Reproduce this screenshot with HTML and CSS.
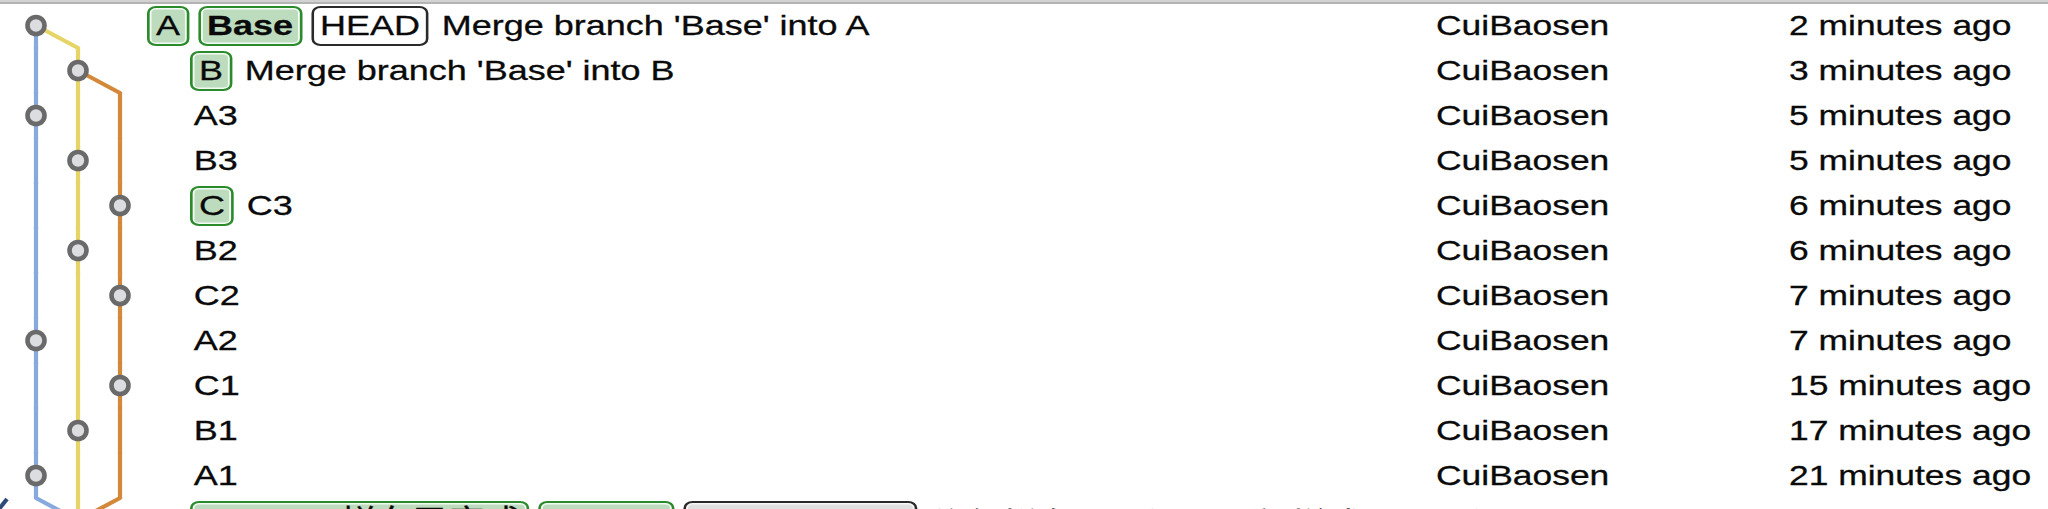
FILE: index.html
```html
<!DOCTYPE html>
<html>
<head>
<meta charset="utf-8">
<title>History</title>
<link rel="stylesheet" href="styles.css">
</head>
<body>
<div class="topbar"></div>
<div class="list">
  <div class="row">
    <svg class="graph g2" viewBox="0 0 147 45">
      <path class="ln blue" d="M36 22.5V46"/>
      <path class="ln yellow" d="M36 22.5L78 45V46"/>
      <circle class="node" cx="36" cy="22.5" r="8.5"/>
    </svg>
    <div class="subject"><div class="fit"><span class="ref">A</span><span class="ref bold">Base</span><span class="ref head">HEAD</span><span class="msg">Merge branch 'Base' into A</span></div></div>
    <div class="author"><span class="fit">CuiBaosen</span></div>
    <div class="date"><span class="fit">2 minutes ago</span></div>
  </div>
  <div class="row">
    <svg class="graph" viewBox="0 0 190 45">
      <path class="ln blue" d="M36 -1V46"/>
      <path class="ln yellow" d="M78 -1V46"/>
      <path class="ln orange" d="M78 22.5L120 45V46"/>
      <circle class="node" cx="78" cy="22.5" r="8.5"/>
    </svg>
    <div class="subject"><div class="fit"><span class="ref">B</span><span class="msg">Merge branch 'Base' into B</span></div></div>
    <div class="author"><span class="fit">CuiBaosen</span></div>
    <div class="date"><span class="fit">3 minutes ago</span></div>
  </div>
  <div class="row">
    <svg class="graph" viewBox="0 0 190 45">
      <path class="ln blue" d="M36 -1V46"/><path class="ln yellow" d="M78 -1V46"/><path class="ln orange" d="M120 -1V46"/>
      <circle class="node" cx="36" cy="22.5" r="8.5"/>
    </svg>
    <div class="subject"><div class="fit"><span class="msg">A3</span></div></div>
    <div class="author"><span class="fit">CuiBaosen</span></div>
    <div class="date"><span class="fit">5 minutes ago</span></div>
  </div>
  <div class="row">
    <svg class="graph" viewBox="0 0 190 45">
      <path class="ln blue" d="M36 -1V46"/><path class="ln yellow" d="M78 -1V46"/><path class="ln orange" d="M120 -1V46"/>
      <circle class="node" cx="78" cy="22.5" r="8.5"/>
    </svg>
    <div class="subject"><div class="fit"><span class="msg">B3</span></div></div>
    <div class="author"><span class="fit">CuiBaosen</span></div>
    <div class="date"><span class="fit">5 minutes ago</span></div>
  </div>
  <div class="row">
    <svg class="graph" viewBox="0 0 190 45">
      <path class="ln blue" d="M36 -1V46"/><path class="ln yellow" d="M78 -1V46"/><path class="ln orange" d="M120 -1V46"/>
      <circle class="node" cx="120" cy="22.5" r="8.5"/>
    </svg>
    <div class="subject"><div class="fit"><span class="ref">C</span><span class="msg">C3</span></div></div>
    <div class="author"><span class="fit">CuiBaosen</span></div>
    <div class="date"><span class="fit">6 minutes ago</span></div>
  </div>
  <div class="row">
    <svg class="graph" viewBox="0 0 190 45">
      <path class="ln blue" d="M36 -1V46"/><path class="ln yellow" d="M78 -1V46"/><path class="ln orange" d="M120 -1V46"/>
      <circle class="node" cx="78" cy="22.5" r="8.5"/>
    </svg>
    <div class="subject"><div class="fit"><span class="msg">B2</span></div></div>
    <div class="author"><span class="fit">CuiBaosen</span></div>
    <div class="date"><span class="fit">6 minutes ago</span></div>
  </div>
  <div class="row">
    <svg class="graph" viewBox="0 0 190 45">
      <path class="ln blue" d="M36 -1V46"/><path class="ln yellow" d="M78 -1V46"/><path class="ln orange" d="M120 -1V46"/>
      <circle class="node" cx="120" cy="22.5" r="8.5"/>
    </svg>
    <div class="subject"><div class="fit"><span class="msg">C2</span></div></div>
    <div class="author"><span class="fit">CuiBaosen</span></div>
    <div class="date"><span class="fit">7 minutes ago</span></div>
  </div>
  <div class="row">
    <svg class="graph" viewBox="0 0 190 45">
      <path class="ln blue" d="M36 -1V46"/><path class="ln yellow" d="M78 -1V46"/><path class="ln orange" d="M120 -1V46"/>
      <circle class="node" cx="36" cy="22.5" r="8.5"/>
    </svg>
    <div class="subject"><div class="fit"><span class="msg">A2</span></div></div>
    <div class="author"><span class="fit">CuiBaosen</span></div>
    <div class="date"><span class="fit">7 minutes ago</span></div>
  </div>
  <div class="row">
    <svg class="graph" viewBox="0 0 190 45">
      <path class="ln blue" d="M36 -1V46"/><path class="ln yellow" d="M78 -1V46"/><path class="ln orange" d="M120 -1V46"/>
      <circle class="node" cx="120" cy="22.5" r="8.5"/>
    </svg>
    <div class="subject"><div class="fit"><span class="msg">C1</span></div></div>
    <div class="author"><span class="fit">CuiBaosen</span></div>
    <div class="date"><span class="fit">15 minutes ago</span></div>
  </div>
  <div class="row">
    <svg class="graph" viewBox="0 0 190 45">
      <path class="ln blue" d="M36 -1V46"/><path class="ln yellow" d="M78 -1V46"/><path class="ln orange" d="M120 -1V46"/>
      <circle class="node" cx="78" cy="22.5" r="8.5"/>
    </svg>
    <div class="subject"><div class="fit"><span class="msg">B1</span></div></div>
    <div class="author"><span class="fit">CuiBaosen</span></div>
    <div class="date"><span class="fit">17 minutes ago</span></div>
  </div>
  <div class="row">
    <svg class="graph" viewBox="0 0 190 45">
      <path class="ln blue" d="M36 -1V46"/><path class="ln yellow" d="M78 -1V46"/><path class="ln orange" d="M120 -1V46"/>
      <circle class="node" cx="36" cy="22.5" r="8.5"/>
    </svg>
    <div class="subject"><div class="fit"><span class="msg">A1</span></div></div>
    <div class="author"><span class="fit">CuiBaosen</span></div>
    <div class="date"><span class="fit">21 minutes ago</span></div>
  </div>
  <div class="row">
    <svg class="graph" viewBox="0 0 190 45">
      <path class="ln navy" d="M7 1L-5 16"/>
      <path class="ln blue" d="M36 -1V0L78 22.5"/>
      <path class="ln yellow" d="M78 -1V46"/>
      <path class="ln orange" d="M120 -1V0L78 22.5"/>
      <circle class="node" cx="78" cy="22.5" r="8.5"/>
    </svg>
    <div class="subject"><div class="fit"><span class="ref">MSG 14 拼车已完成</span><span class="ref">release</span><span class="ref remote">origin/release</span><span class="msg">修复拼车页面问题更新样式</span></div></div>
    <div class="author"><span class="fit">北江王</span></div>
    <div class="date"><span class="fit">25 minutes ago</span></div>
  </div>
</div>
</body>
</html>
```

FILE: styles.css
```css
html, body {
  margin: 0;
  padding: 0;
  overflow: hidden;
  background: #ffffff;
}

body {
  font-family: "Liberation Sans", "Noto Sans CJK SC", sans-serif;
  font-size: 28px;
  color: #0a0a0a;
}

.topbar {
  height: 2px;
  background: #d2d2d2;
  border-bottom: 2px solid #b4b4b4;
  margin-bottom: -1px;
  position: relative;
  z-index: 1;
}

.list {
  display: flex;
  flex-direction: column;
}

.row {
  display: flex;
  align-items: center;
  height: 45px;
  flex: none;
}

.graph {
  flex: none;
  width: 190px;
  height: 45px;
  overflow: visible;
}

.graph.g2 {
  width: 147px;
}

.ln {
  fill: none;
  stroke-width: 4.2;
  stroke-linejoin: round;
}

.blue { stroke: #87a9de; }
.yellow { stroke: #e6d466; }
.orange { stroke: #d3883a; }
.navy { stroke: #2f4a78; }

.node {
  fill: #dcdde1;
  stroke: #6a6a6a;
  stroke-width: 4.6;
}

.subject {
  flex: 1;
  min-width: 0;
  height: 45px;
  display: flex;
  align-items: center;
}

.fit {
  display: inline-flex;
  align-items: center;
  gap: 7px;
  white-space: nowrap;
  transform: scaleX(1.265);
  transform-origin: 0 50%;
  -webkit-text-stroke: 0.3px #0a0a0a;
}

.subject .fit {
  transform: scaleX(1.285);
}

.ref {
  box-sizing: border-box;
  height: 40px;
  line-height: 36px;
  padding: 0 5px;
  border: 2px solid #2b8a2b;
  border-radius: 7px;
  background: #bddcbe;
  box-shadow: inset 0 0 0 1.5px #f4faf4;
  color: #0a0a0a;
}

.ref.bold {
  font-weight: bold;
}

.ref.head {
  border-color: #2a2a2a;
  background: #ffffff;
  box-shadow: none;
}

.ref.remote {
  border-color: #2a2a2a;
  background: #e0e0e0;
  box-shadow: inset 0 0 0 1.5px #f7f7f7;
}

.msg {
  margin-left: 3px;
}

.author {
  flex: none;
  width: 353px;
  height: 45px;
  display: flex;
  align-items: center;
}

.date {
  flex: none;
  width: 259px;
  height: 45px;
  display: flex;
  align-items: center;
}
```
